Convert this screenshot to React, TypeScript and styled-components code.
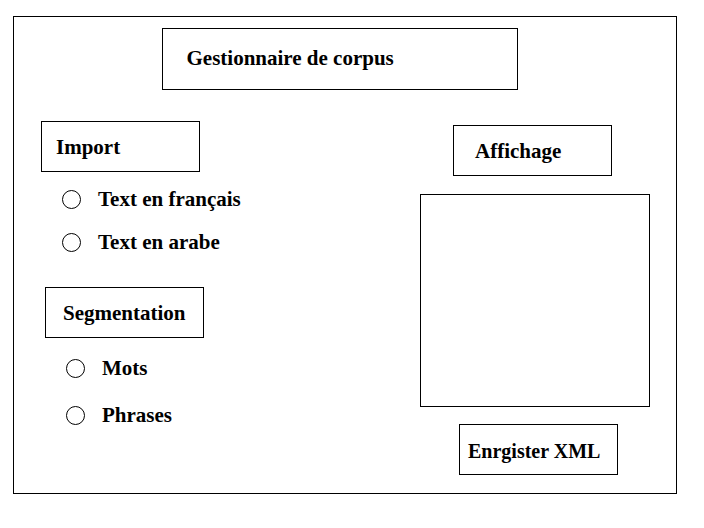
import React, { useState } from "react";
import styled, { createGlobalStyle, css } from "styled-components";

const GlobalStyle = createGlobalStyle`
  *, *::before, *::after {
    box-sizing: border-box;
  }
  body {
    margin: 0;
    background: #fff;
    color: #000;
    font-family: "Liberation Serif", "Times New Roman", serif;
    font-weight: 700;
  }
`;

const outlined = css`
  border: 1px solid #000;
  background: #fff;
`;

const Frame = styled.main`
  ${outlined}
  display: flex;
  flex-direction: column;
  margin: 16px 27px 34px 13px;
  padding: 11px 26px 18px 27px;
`;

const Header = styled.header`
  display: flex;
  justify-content: center;
  padding-right: 12px;
`;

const Title = styled.h1`
  ${outlined}
  flex: 0 1 356px;
  margin: 0;
  padding: 17px 24px 19px;
  font-size: 21px;
  line-height: 24px;
`;

const Columns = styled.div`
  display: flex;
  justify-content: space-between;
  gap: 24px;
  padding-top: 31px;
`;

const Choices = styled.div`
  display: flex;
  flex-direction: column;
  gap: 33px;
`;

const Group = styled.fieldset<{ $indent?: number }>`
  display: flex;
  flex-direction: column;
  min-width: 0;
  margin: 0 0 0 ${({ $indent = 0 }) => $indent}px;
  padding: 0;
  border: 0;
`;

const Heading = styled.h2<{ $inset: number; $indent?: number }>`
  ${outlined}
  align-self: flex-start;
  width: 159px;
  margin: 0 0 0 ${({ $indent = 0 }) => $indent}px;
  padding: 13px 0 12px ${({ $inset }) => $inset}px;
  font-size: 21px;
  line-height: 24px;
`;

const OptionList = styled.div<{ $top: number; $gap: number }>`
  display: flex;
  flex-direction: column;
  gap: ${({ $gap }) => $gap}px;
  padding: ${({ $top }) => $top}px 0 0 21px;
`;

const Option = styled.label`
  display: flex;
  align-items: center;
  gap: 17px;
  font-size: 21px;
  line-height: 24px;
`;

const Radio = styled.input`
  ${outlined}
  appearance: none;
  flex: none;
  width: 19px;
  height: 19px;
  margin: 0;
  border-radius: 50%;

  &:checked {
    background: radial-gradient(circle, #000 4px, #fff 5px);
  }
`;

const Display = styled.section`
  display: flex;
  flex-direction: column;
  flex: 0 1 230px;
  padding-top: 4px;
`;

const Viewer = styled.textarea`
  ${outlined}
  display: block;
  width: 100%;
  height: 213px;
  margin: 18px 0 17px;
  padding: 8px;
  border-radius: 0;
  color: inherit;
  font: inherit;
  resize: none;
`;

const SaveButton = styled.button`
  ${outlined}
  align-self: flex-start;
  width: 159px;
  margin: 0 0 0 39px;
  padding: 14px 0 11px 8px;
  border-radius: 0;
  color: inherit;
  font-family: inherit;
  font-size: 20px;
  font-weight: inherit;
  line-height: 24px;
  text-align: left;
  white-space: nowrap;
`;

type ChoiceGroupProps = {
  name: string;
  title: string;
  options: string[];
  inset: number;
  top: number;
  gap: number;
  indent?: number;
};

function ChoiceGroup({ name, title, options, inset, top, gap, indent }: ChoiceGroupProps) {
  const [selected, setSelected] = useState<string | null>(null);
  return (
    <Group $indent={indent} aria-labelledby={`${name}-title`}>
      <Heading id={`${name}-title`} $inset={inset}>
        {title}
      </Heading>
      <OptionList $top={top} $gap={gap}>
        {options.map((option) => (
          <Option key={option}>
            <Radio
              type="radio"
              name={name}
              value={option}
              checked={selected === option}
              onChange={() => setSelected(option)}
            />
            {option}
          </Option>
        ))}
      </OptionList>
    </Group>
  );
}

export default function App() {
  return (
    <>
      <GlobalStyle />
      <Frame>
        <Header>
          <Title>Gestionnaire de corpus</Title>
        </Header>
        <Columns>
          <Choices>
            <ChoiceGroup
              name="import"
              title="Import"
              options={["Text en français", "Text en arabe"]}
              inset={14}
              top={15}
              gap={19}
            />
            <ChoiceGroup
              name="segmentation"
              title="Segmentation"
              options={["Mots", "Phrases"]}
              inset={17}
              top={18}
              gap={23}
              indent={4}
            />
          </Choices>
          <Display>
            <Heading id="display-title" $inset={21} $indent={33}>
              Affichage
            </Heading>
            <Viewer aria-labelledby="display-title" />
            <SaveButton type="button">Enrgister XML</SaveButton>
          </Display>
        </Columns>
      </Frame>
    </>
  );
}
